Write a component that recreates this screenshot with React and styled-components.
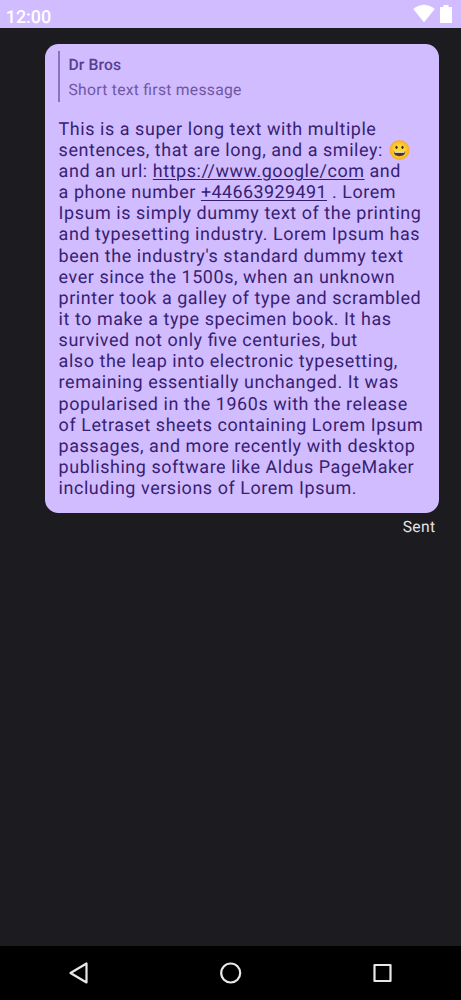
import React from "react";
import styled, { createGlobalStyle } from "styled-components";

const Global = createGlobalStyle`
  body { margin: 0; background: #1c1b1f; }
  * { box-sizing: border-box; }
`;
const Screen = styled.div`
  width: 461px;
  height: 1000px;
  display: flex;
  flex-direction: column;
  background: #1c1b1f;
  font-family: Roboto, sans-serif;
  text-rendering: geometricPrecision;
  font-feature-settings: "liga" 1;
`;
const StatusBar = styled.header`
  height: 28px;
  flex: none;
  display: flex;
  justify-content: space-between;
  padding: 4px 9.5px 0 5.7px;
  background: #d0bcff;
  color: #fff;
`;
const Clock = styled.span`
  font-size: 17.95px;
  font-weight: 500;
  line-height: 28px;
`;
const StatusIcons = styled.div`
  display: flex;
  gap: 5px;
`;
const Conversation = styled.main`
  flex: 1;
  display: flex;
  flex-direction: column;
  align-items: flex-end;
  padding: 16px 22.5px 0 0;
`;
const Bubble = styled.article`
  width: 393.5px;
  height: 469px;
  border-radius: 13.5px;
  background: #d0bcff;
  color: #381e72;
  padding: 7px 0 0 13px;
`;
const Quote = styled.blockquote`
  margin: 0;
  height: 51px;
  border-left: 2px solid #8b72be;
  padding-left: 8.5px;
  display: flex;
  flex-direction: column;
`;
const QuoteAuthor = styled.span`
  font-size: 15.7px;
  font-weight: 500;
  line-height: 27px;
  letter-spacing: 0.11px;
  color: #573f8e;
`;
const QuoteText = styled.span`
  font-size: 15.7px;
  line-height: 24px;
  letter-spacing: 0.27px;
  color: #7056a4;
`;
const Message = styled.p`
  margin: 16.6px 0 0 0.6px;
  font-size: 17.95px;
  line-height: 21.17px;
  letter-spacing: 0.56px;
  white-space: nowrap;
`;
const Line = styled.span`
  display: block;
  height: 21.17px;
`;
const Link = styled.a`
  text-decoration: underline;
  text-decoration-thickness: 1px;
  text-underline-offset: 2px;
  letter-spacing: ${({ $spacing }) => $spacing || "inherit"};
`;
const Emoji = styled.svg`
  width: 22px;
  height: 22px;
  margin: -3px 0 -3px 1.3px;
  vertical-align: -2px;
`;
const Status = styled.span`
  font-size: 15.7px;
  line-height: 20px;
  margin: 3.5px 3.2px 0 0;
  letter-spacing: 0.28px;
  color: #e6e1e5;
`;
const NavBar = styled.nav`
  height: 54px;
  flex: none;
  display: flex;
  align-items: center;
  justify-content: space-between;
  padding: 0 66px;
  background: #000;
`;
const NavIcon = styled.svg`
  width: 24px;
  height: 24px;
  fill: none;
  stroke: #e8e8e8;
  stroke-width: 2.2;
  stroke-linejoin: round;
`;

const Smiley = () => (
  <Emoji viewBox="0 0 22 22" role="img" aria-label="smiley">
    <defs>
      <radialGradient id="face">
        <stop offset="0.5" stopColor="#fdd835" />
        <stop offset="1" stopColor="#f9a825" />
      </radialGradient>
    </defs>
    <circle cx="10.500" cy="11" r="10" fill="url(#face)" />
    <ellipse cx="7.500" cy="8.300" rx="1.100" ry="1.600" fill="#422b0d" />
    <ellipse cx="13.500" cy="8.300" rx="1.100" ry="1.600" fill="#422b0d" />
    <path d="M4.700 12.300h11.600c0 3.300-2.500 4.900-5.800 4.900s-5.800-1.600-5.800-4.900z" fill="#4b3527" />
    <path d="M5.100 12.300h10.800l-.5 1.500H5.600z" fill="#fff" />
  </Emoji>
);

const lines = [
  "This is a super long text with multiple",
  <>sentences, that are long, and a smiley: <Smiley /></>,
  <>and an url: <Link>https://www.google/com</Link> and</>,
  <>a phone number <Link $spacing="0.42px">+44663929491</Link> . Lorem</>,
  "Ipsum is simply dummy text of the printing",
  "and typesetting industry. Lorem Ipsum has",
  "been the industry's standard dummy text",
  "ever since the 1500s, when an unknown",
  "printer took a galley of type and scrambled",
  "it to make a type specimen book. It has",
  "survived not only five centuries, but",
  "also the leap into electronic typesetting,",
  "remaining essentially unchanged. It was",
  "popularised in the 1960s with the release",
  "of Letraset sheets containing Lorem Ipsum",
  "passages, and more recently with desktop",
  "publishing software like Aldus PageMaker",
  "including versions of Lorem Ipsum.",
];

export default function App() {
  return (
    <Screen>
      <Global />
      <StatusBar>
        <Clock>12:00</Clock>
        <StatusIcons>
          <svg width="22" height="20" viewBox="0 0 22 20"><path d="M0.500 5Q11-3 21.500 5L11 18z" fill="#fff" stroke="#fff" strokeWidth="0.500" strokeLinejoin="round" /></svg>
          <svg width="12" height="20" viewBox="0 0 12 20"><path d="M3.500 1h5v2H11.500q.5 0 .5.500V18.500q0 .5-.5.500H.5q-.5 0-.5-.5V3.500Q0 3 .5 3h3z" fill="#fff" /></svg>
        </StatusIcons>
      </StatusBar>
      <Conversation>
        <Bubble>
          <Quote>
            <QuoteAuthor>Dr Bros</QuoteAuthor>
            <QuoteText>Short text first message</QuoteText>
          </Quote>
          <Message>{lines.map((line, i) => <Line key={i}>{line}</Line>)}</Message>
        </Bubble>
        <Status>Sent</Status>
      </Conversation>
      <NavBar>
        <NavIcon viewBox="0 0 24 24"><path d="M20.500 2.500v19L4.500 12z" /></NavIcon>
        <NavIcon viewBox="0 0 24 24"><circle cx="11.700" cy="12" r="9.500" /></NavIcon>
        <NavIcon viewBox="0 0 24 24"><path d="M3.500 4h16v16h-16z" /></NavIcon>
      </NavBar>
    </Screen>
  );
}
